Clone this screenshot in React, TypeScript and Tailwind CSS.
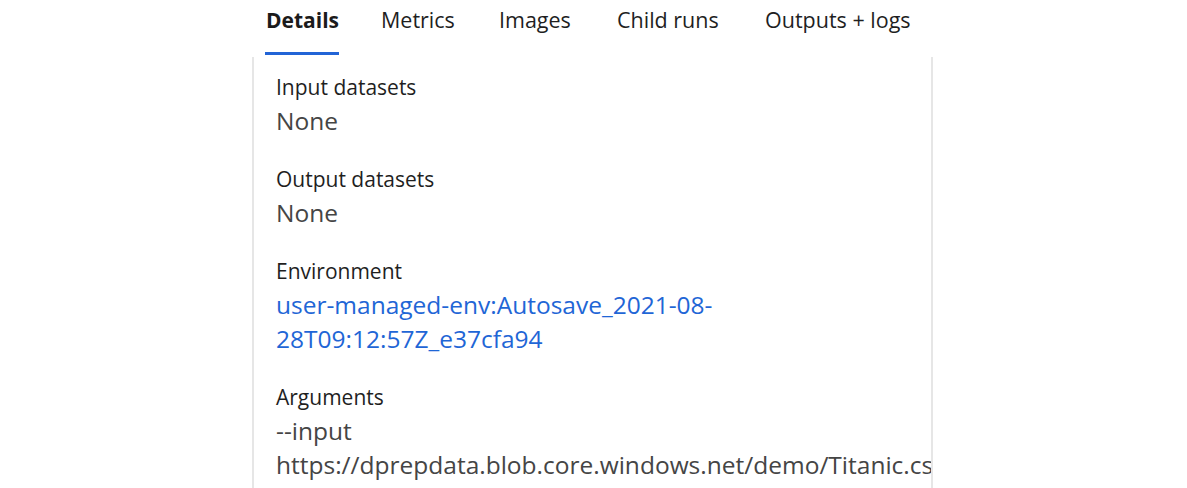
import React from "react";

const tabs = [
  { label: "Details", w: "w-[116px]", active: true },
  { label: "Metrics", w: "w-[118px]" },
  { label: "Images", w: "w-[118px]" },
  { label: "Child runs", w: "w-[148px]" },
  { label: "Outputs + logs", w: "w-[170px]" },
];

function Field({ label, children }: { label: string; children: React.ReactNode }) {
  return (
    <div className="flex flex-col">
      <div className="text-[21px] leading-[34px] text-[#1f1f1f]">{label}</div>
      <div className="text-[24.5px] leading-[34px] text-[#454545]">{children}</div>
    </div>
  );
}

export default function App() {
  return (
    <div
      className="w-[1187px] h-[488px] bg-white overflow-hidden"
      style={{ fontFamily: '"Open Sans", "Noto Sans", sans-serif' }}
    >
      <div className="ml-[265px] flex h-[57px]">
        {tabs.map((t) => (
          <div key={t.label} className={`${t.w} flex flex-col items-start`}>
            <div
              className={`h-[52px] pt-[2px] leading-[36px] whitespace-nowrap ${
                t.active ? "text-[21px] font-bold text-[#1b1b1b] px-[1px]" : "text-[21.5px] text-[#1f1f1f]"
              }`}
            >
              {t.label}
            </div>
            {t.active && <div className="h-[3px] w-[74px] bg-[#2264d6]" />}
          </div>
        ))}
      </div>
      <div className="ml-[252px] w-[681px] h-[431px] border-l-2 border-r-2 border-[#e6e6e6] pl-[22px] pt-[13px] flex flex-col gap-[24px] overflow-hidden">
        <Field label="Input datasets">None</Field>
        <Field label="Output datasets">None</Field>
        <Field label="Environment">
          <span className="text-[#1f66d6]">
            user-managed-env:Autosave_2021-08-
            <br />
            28T09:12:57Z_e37cfa94
          </span>
        </Field>
        <Field label="Arguments">
          <div>--input</div>
          <div className="whitespace-nowrap">https://dprepdata.blob.core.windows.net/demo/Titanic.csv</div>
        </Field>
      </div>
    </div>
  );
}
